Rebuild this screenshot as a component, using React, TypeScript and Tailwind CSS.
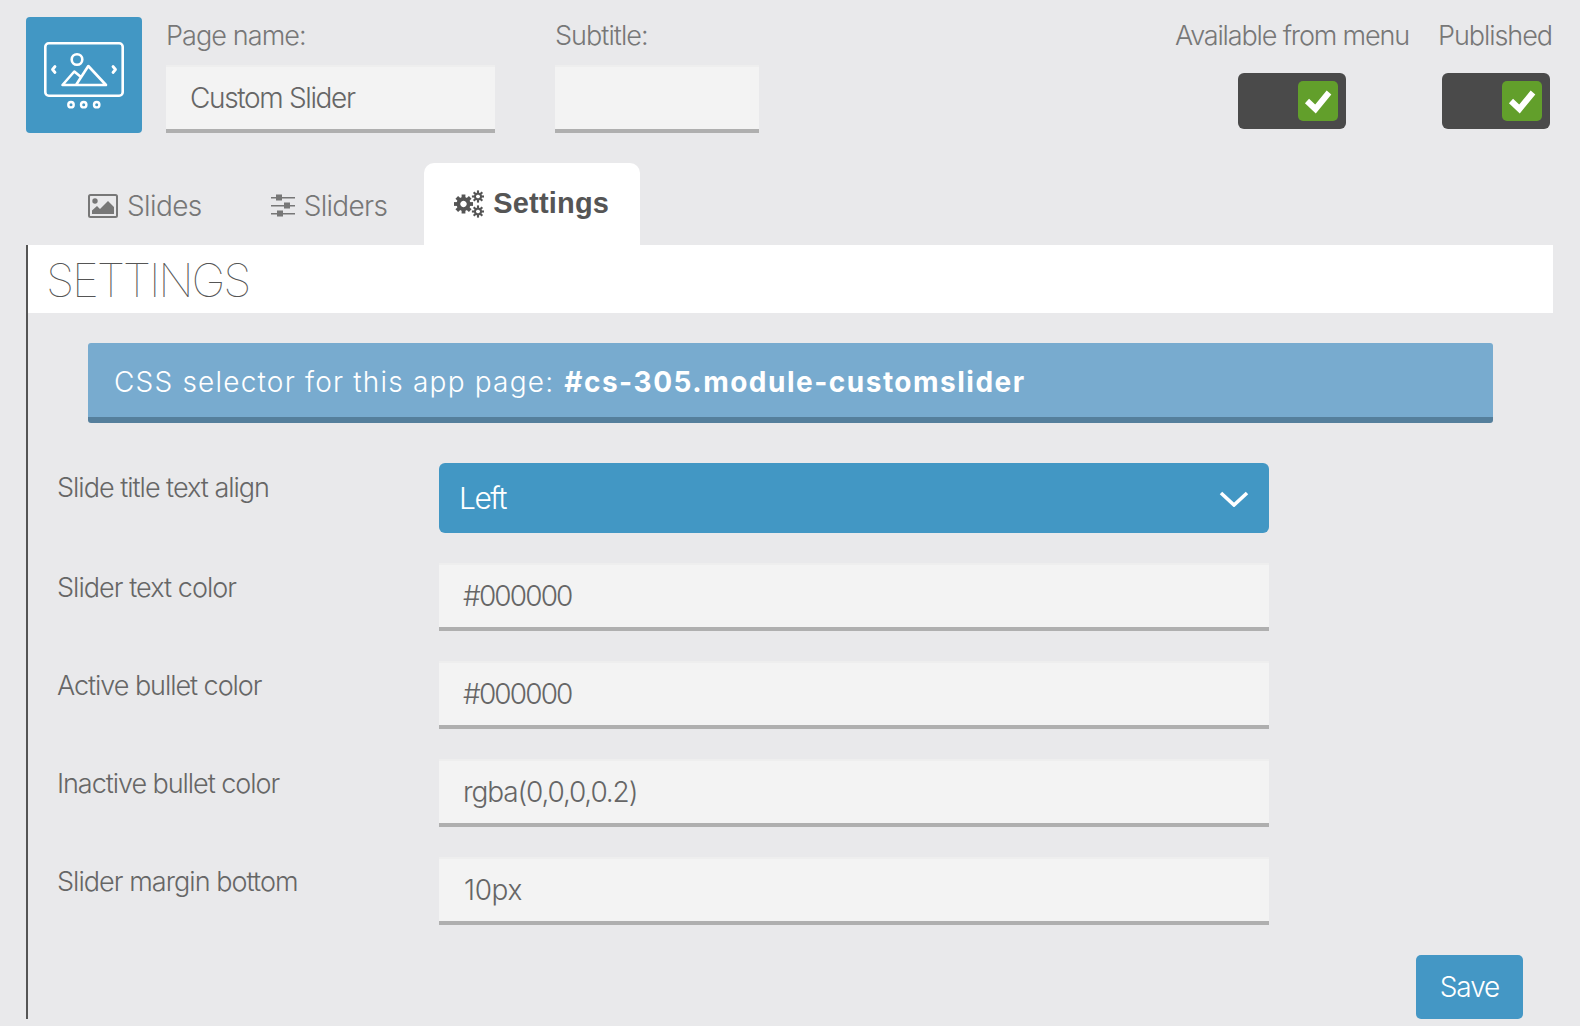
function Logo() {
  return (
    <svg width="116" height="116" viewBox="0 0 116 116" fill="none" stroke="#fff" strokeWidth="2.6" strokeLinejoin="round" strokeLinecap="round">
      <rect x="19.300" y="26.300" width="77.400" height="52.400" rx="3.500" />
      <circle cx="51" cy="42.500" r="5.300" />
      <path d="M50 68 L62.300 49 L80 68 H36.500 L48.300 54.500 L55 60" />
      <path d="M29 49.500 L26.500 52.500 L29 55.500" strokeWidth="2.800" />
      <path d="M87 49.500 L89.500 52.500 L87 55.500" strokeWidth="2.800" />
      <circle cx="45" cy="87.700" r="2.700" strokeWidth="2.400" />
      <circle cx="57.700" cy="87.700" r="2.700" strokeWidth="2.400" />
      <circle cx="70.700" cy="87.700" r="2.700" strokeWidth="2.400" />
    </svg>
  );
}

function ImageIcon() {
  return (
    <svg width="30" height="24" viewBox="0 0 30 24">
      <rect x="1" y="1" width="28" height="22" rx="1.500" fill="none" stroke="#777" strokeWidth="2" />
      <circle cx="7" cy="7" r="2.700" fill="#777" />
      <path d="M4 20 V16.500 L9 12 L12 15 L20 7 L26 13 V20 Z" fill="#777" />
    </svg>
  );
}

function SlidersIcon() {
  return (
    <svg width="26" height="24" viewBox="0 0 26 24" fill="#777">
      <rect x="1" y="3" width="24" height="1.500" />
      <rect x="6" y="0.500" width="6" height="6" />
      <rect x="1" y="11" width="24" height="1.500" />
      <rect x="14" y="8.500" width="6" height="6" />
      <rect x="1" y="19" width="24" height="1.500" />
      <rect x="7" y="16.500" width="6" height="6" />
    </svg>
  );
}

function GearsIcon() {
  const teeth = (cx: number, cy: number, r: number, w: number, t: number, n: number) =>
    Array.from({ length: n }, (_, i) => (
      <rect key={i} x={cx - w / 2} y={cy - r - t} width={w} height={t + 2} transform={`rotate(${(360 / n) * i} ${cx} ${cy})`} />
    ));
  return (
    <svg width="30" height="28" viewBox="0 0 30 28" fill="#555">
      {teeth(9.500, 14, 7, 3.800, 2.500, 8)}
      <path fillRule="evenodd" d="M9.500 7 a7 7 0 1 0 0.010 0 Z M9.500 10.800 a3.200 3.200 0 1 1 -0.010 0 Z" />
      {teeth(24, 6.500, 4, 2.100, 2.100, 8)}
      <path fillRule="evenodd" d="M24 2.500 a4 4 0 1 0 0.010 0 Z M24 4.500 a2 2 0 1 1 -0.010 0 Z" />
      {teeth(24, 21.500, 4, 2.100, 2.100, 8)}
      <path fillRule="evenodd" d="M24 17.500 a4 4 0 1 0 0.010 0 Z M24 19.500 a2 2 0 1 1 -0.010 0 Z" />
    </svg>
  );
}

function Toggle() {
  return (
    <div className="flex h-[56px] w-[108px] items-center justify-end rounded-[6px] bg-[#4a4a4a] pr-[8px]">
      <div className="flex h-[40px] w-[40px] items-center justify-center rounded-[5px] bg-[#629f2b]">
        <svg width="40" height="40" viewBox="0 0 40 40" fill="none" stroke="#fff" strokeWidth="6">
          <path d="M9 20 L17.500 28 L31 11.500" />
        </svg>
      </div>
    </div>
  );
}

function Field({ value, className }: { value: string; className: string }) {
  return (
    <div className={`flex h-[68px] items-center border-b-[4px] border-t-[2px] border-b-[#afafaf] border-t-[#eeeeee] bg-[#f3f3f3] pl-[24px] text-[28px] text-[#666] ${className}`}>
      {value}
    </div>
  );
}

function Row({ label, value, labelClass, className }: { label: string; value: string; labelClass: string; className: string }) {
  return (
    <div className="flex">
      <div className={`w-[382px] pt-[5px] text-[27px] text-[#666] ${labelClass}`}>{label}</div>
      <Field value={value} className={`w-[830px] ${className}`} />
    </div>
  );
}

export default function App() {
  return (
    <div className="min-h-[1026px] bg-[#e9e9eb] pl-[26px] pr-[27px] pt-[17px] font-['Inter','Liberation_Sans',sans-serif] font-[270]">
      <header className="flex h-[116px]">
        <div className="h-[116px] w-[116px] rounded-[4px] bg-[#4297c4]">
          <Logo />
        </div>
        <div className="ml-[24px] w-[329px]">
          <div className="h-[48px] -translate-y-[2px] pt-[1px] text-[27px] tracking-[-0.9px] text-[#777]">Page name:</div>
          <Field value="Custom Slider" className="w-[329px] tracking-[-1.35px]" />
        </div>
        <div className="ml-[60px] w-[204px]">
          <div className="h-[48px] -translate-y-[2px] pt-[1px] text-[27px] tracking-[-0.95px] text-[#777]">Subtitle:</div>
          <Field value="" className="w-[204px]" />
        </div>
        <div className="ml-auto flex">
          <div className="flex w-[234px] flex-col items-end">
            <div className="h-[56px] -translate-y-[2px] whitespace-nowrap pt-[1px] text-[27px] tracking-[-1.15px] text-[#777]">Available from menu</div>
            <div className="mr-[63px]"><Toggle /></div>
          </div>
          <div className="ml-[30px] flex w-[114px] flex-col items-end">
            <div className="h-[56px] -translate-y-[2px] pr-[1px] pt-[1px] text-[27px] tracking-[-1.05px] text-[#777]">Published</div>
            <div className="mr-[3px]"><Toggle /></div>
          </div>
        </div>
      </header>

      <nav className="mt-[30px] flex h-[82px] pl-[62px]">
        <div className="flex items-center pt-[3px] text-[#777]">
          <ImageIcon />
          <span className="ml-[9px] text-[28px] tracking-[-0.6px]">Slides</span>
        </div>
        <div className="ml-[68px] flex items-center pt-[3px] text-[#777]">
          <SlidersIcon />
          <span className="ml-[8px] text-[28px] tracking-[-0.7px]">Sliders</span>
        </div>
        <div className="ml-[37px] flex w-[216px] items-center rounded-t-[10px] bg-white pl-[30px] text-[#555]">
          <GearsIcon />
          <span className="ml-[9px] font-['Liberation_Sans',sans-serif] text-[29px] font-bold tracking-[0.2px]">Settings</span>
        </div>
      </nav>

      <main className="h-[774px] border-l-[2px] border-[#555]">
        <div className="flex h-[68px] items-center bg-white pl-[18px] pt-[3px] text-[46px] font-thin tracking-[-2.2px] text-[#555]">SETTINGS</div>
        <div className="pl-[60px] pr-[60px] pt-[30px]">
          <div className="flex h-[80px] items-center rounded-[3px] border-b-[6px] border-[#557f9c] bg-[#78abcf] pl-[26px] pt-[3px] text-[28px] tracking-[1.25px] text-white">
            <span className="tracking-[1.2px]">CSS selector for this app page:</span>
            <span className="ml-[10px] font-bold tracking-[1.5px]">#cs-305.module-customslider</span>
          </div>
        </div>
        <div className="pl-[29px] pt-[40px]">
          <div className="flex">
            <div className="w-[382px] pt-[5px] text-[27px] tracking-[-1px] text-[#666]">Slide title text align</div>
            <div className="flex h-[70px] w-[830px] items-center justify-between rounded-[6px] bg-[#4297c4] pl-[20px] pr-[20px] text-[30px] tracking-[-1.5px] text-white">
              <span>Left</span>
              <svg width="30" height="18" viewBox="0 0 30 18" fill="none" stroke="#fff" strokeWidth="3.600">
                <path d="M2 4 L15 16 L28 4" />
              </svg>
            </div>
          </div>
          <div className="mt-[30px] flex flex-col gap-[30px]">
            <Row label="Slider text color" value="#000000" labelClass="tracking-[-0.95px]" className="tracking-[-1.85px]" />
            <Row label="Active bullet color" value="#000000" labelClass="tracking-[-1.05px]" className="tracking-[-1.85px]" />
            <Row label="Inactive bullet color" value="rgba(0,0,0,0.2)" labelClass="tracking-[-1.05px]" className="tracking-[-1.15px]" />
            <Row label="Slider margin bottom" value="10px" labelClass="tracking-[-0.95px]" className="pl-[25px] tracking-[-0.35px]" />
          </div>
        </div>
        <div className="mt-[30px] flex justify-end pr-[30px]">
          <button className="flex h-[64px] w-[107px] items-center justify-center rounded-[5px] bg-[#4497c5] text-[28px] tracking-[-1.1px] text-white">Save</button>
        </div>
      </main>
    </div>
  );
}
